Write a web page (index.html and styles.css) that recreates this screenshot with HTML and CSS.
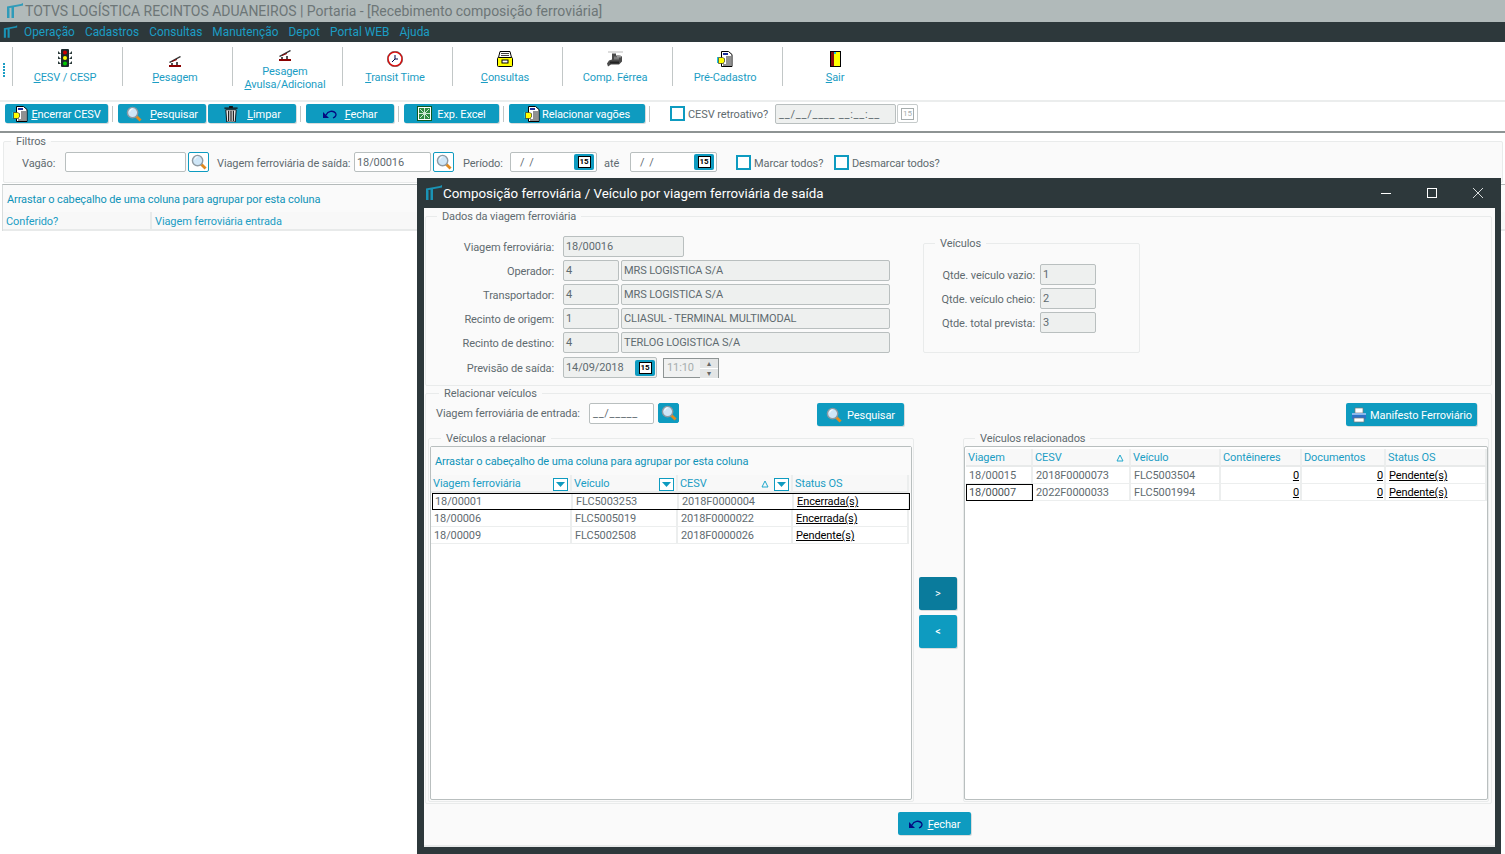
FILE: index.html
```html
<!DOCTYPE html>
<html lang="pt-BR">
<head>
<meta charset="utf-8">
<title>TOTVS Logística Recintos Aduaneiros</title>
<link rel="stylesheet" href="styles.css">
</head>
<body>
<svg class="defs" aria-hidden="true">
  <symbol id="logo" viewBox="0 0 18 16"><path d="M1 15V4h2.500v11zM5.500 15V4H8v11zM1 3.500 15 1l2-1v2.500L1 5.500z" fill="currentColor"/></symbol>
  <symbol id="traffic" viewBox="0 0 14 18"><path d="M0 2l3 3H0zM14 2l-3 3h3zM0 7l3 3H0zM14 7l-3 3h3zM0 12l3 3H0zM14 12l-3 3h3z" fill="#2b3a3a"/><rect x="3" y="0" width="8" height="18" rx="1" fill="#1d2a2c"/><circle cx="7" cy="3.500" r="2" fill="#c00"/><circle cx="7" cy="9" r="2" fill="#ff0"/><circle cx="7" cy="14.500" r="2" fill="#0c0"/></symbol>
  <symbol id="scale" viewBox="0 0 12 11"><path d="M0 6 11 0l1 1L1 7z" fill="#333"/><path d="M2 7h2v2H2zM7 6h2v3H7z" fill="#555"/><path d="M0 9h12v2H0z" fill="#8b0000"/><path d="M3 5l5-2v1L3 6z" fill="#8b0000"/></symbol>
  <symbol id="clock" viewBox="0 0 16 16"><circle cx="8" cy="8" r="7" fill="#fff" stroke="#e01010" stroke-width="1.600"/><circle cx="8" cy="8" r="7.800" fill="none" stroke="#222" stroke-width=".4"/><path d="M8 4v4l-3 3M8 8h3" fill="none" stroke="#004" stroke-width="1"/></symbol>
  <symbol id="box" viewBox="0 0 16 16"><path d="M3 .5h10l1.500 6h-13z" fill="#fff" stroke="#000"/><path d="M4 2.500h8M4 4.500h8" stroke="#444"/><rect x=".5" y="6.500" width="15" height="9" rx="1" fill="#ff0" stroke="#000"/><rect x="5" y="9" width="6" height="3" fill="#fff" stroke="#000"/></symbol>
  <symbol id="train" viewBox="0 0 16 15"><path d="M1 .5h15" stroke="#bbb"/><path d="M5 2h4v2h3l3 1v5l-3 3H4l-3 2-1-3 2-3 3-1z" fill="#4a4a4a"/><path d="M7 5h5v3H7z" fill="#7c7c7c"/><path d="M3 10h9v2H3z" fill="#222"/><path d="M10 4h4v2h-4z" fill="#999"/></symbol>
  <symbol id="doc" viewBox="0 0 16 16"><path d="M4.500 .5h7l3.500 3v12H4.500z" fill="#fff" stroke="#000"/><path d="M6 2h5v2H6z" fill="#1a2f9c"/><path d="M9 6h5M9 8h5M9 10h5M9 12h5M6 14h8" stroke="#222"/><path d="M0 6h1.500v6H0z" fill="#18c8e0"/><path d="M1.500 6.500h4l2.500 1.500-1 1 1 1-1 1-.5 1.500h-5z" fill="#ff0" stroke="#333" stroke-width=".7"/></symbol>
  <symbol id="door" viewBox="0 0 11 16"><rect x=".5" y=".5" width="10" height="15" fill="#ff0" stroke="#000"/><path d="M1 1h3v14H1z" fill="#8b0d0d"/><path d="M4 1h2v2H4z" fill="#18c8e0"/></symbol>
  <symbol id="lens" viewBox="0 0 17 17"><path d="M10 10l5.500 5.500" stroke="#e08a20" stroke-width="3"/><circle cx="7" cy="7" r="5.500" fill="#cfe6f7" stroke="#8e9aa3" stroke-width="1.500"/><path d="M4 6a3 3 0 0 1 3-3" stroke="#fff" fill="none"/></symbol>
  <symbol id="trash" viewBox="0 0 14 17"><path d="M5 0h4v1.500h5V3H0V1.500h5z" fill="#111"/><path d="M1.500 4h11l-1 13h-9z" fill="#e8e8e8" stroke="#111"/><path d="M4.500 5v11M7 5v11M9.500 5v11" stroke="#111" stroke-width="1.200"/></symbol>
  <symbol id="undo" viewBox="0 0 14 10"><path d="M0 3v6h6z" fill="#040a80"/><path d="M3 6C5 2 10 1 12.500 4c1.200 2 0 4-2.500 5" fill="none" stroke="#040a80" stroke-width="1.300"/></symbol>
  <symbol id="excel" viewBox="0 0 15 15"><rect x=".5" y=".5" width="14" height="14" fill="#fff" stroke="#0d5a20"/><path d="M2 2h11v11H2z" fill="#2f8a40"/><path d="M3 3l9 9M12 3l-9 9M7.500 2v11M2 7.500h11" stroke="#cfe8d3"/></symbol>
  <symbol id="printer" viewBox="0 0 16 16"><path d="M4 1h8v5H4z" fill="#fff" stroke="#777" stroke-width=".7"/><path d="M1 6h14v6H1z" fill="#2e72c8"/><path d="M1 6h14v2H1z" fill="#8ab8ea"/><path d="M3 11h10v4H3z" fill="#fff" stroke="#777" stroke-width=".7"/></symbol>
  <symbol id="caret" viewBox="0 0 9 5"><path d="M0 0h9L4.500 5z" fill="currentColor"/></symbol>
  <symbol id="sort" viewBox="0 0 8 8"><path d="M4 1l3 6H1z" fill="none" stroke="#20a8cc"/></symbol>
</svg>

<div class="desk">
  <header class="titlebar"><svg class="logo"><use href="#logo"/></svg><span>TOTVS LOGÍSTICA RECINTOS ADUANEIROS | Portaria - [Recebimento composição ferroviária]</span></header>
  <nav class="menubar">
    <svg class="logo logo-menu"><use href="#logo"/></svg>
    <span>Operação</span><span>Cadastros</span><span>Consultas</span><span>Manutenção</span><span>Depot</span><span>Portal WEB</span><span>Ajuda</span>
  </nav>

  <div class="toolbar">
    <div class="grip"></div>
    <div class="tool"><div class="slot"><svg class="i-traffic"><use href="#traffic"/></svg></div><div class="tool-label"><u>C</u>ESV / CESP</div></div>
    <div class="tool"><div class="slot"><svg class="i-scale"><use href="#scale"/></svg></div><div class="tool-label"><u>P</u>esagem</div></div>
    <div class="tool tool-two"><div class="slot"><svg class="i-scale"><use href="#scale"/></svg></div><div class="tool-label">Pesagem<br><u>A</u>vulsa/Adicional</div></div>
    <div class="tool"><div class="slot"><svg class="i-16"><use href="#clock"/></svg></div><div class="tool-label"><u>T</u>ransit Time</div></div>
    <div class="tool"><div class="slot"><svg class="i-16"><use href="#box"/></svg></div><div class="tool-label"><u>C</u>onsultas</div></div>
    <div class="tool"><div class="slot"><svg class="i-16"><use href="#train"/></svg></div><div class="tool-label">Comp. Férrea</div></div>
    <div class="tool"><div class="slot"><svg class="i-16"><use href="#doc"/></svg></div><div class="tool-label">Pré-Cadastro</div></div>
    <div class="tool"><div class="slot"><svg class="i-door"><use href="#door"/></svg></div><div class="tool-label"><u>S</u>air</div></div>
  </div>

  <div class="actionbar">
    <button class="btn w-encerrar"><svg class="i-16"><use href="#doc"/></svg><span><u>E</u>ncerrar CESV</span></button>
    <i class="bar-sep"></i>
    <button class="btn w-88"><svg class="i-16"><use href="#lens"/></svg><span><u>P</u>esquisar</span></button>
    <button class="btn w-88 btn-next"><svg class="i-16"><use href="#trash"/></svg><span><u>L</u>impar</span></button>
    <i class="bar-sep"></i>
    <button class="btn w-88"><svg class="i-undo"><use href="#undo"/></svg><span><u>F</u>echar</span></button>
    <i class="bar-sep"></i>
    <button class="btn w-excel"><svg class="i-15"><use href="#excel"/></svg><span>Exp. Excel</span></button>
    <i class="bar-sep"></i>
    <button class="btn w-relacionar"><svg class="i-16"><use href="#doc"/></svg><span>Relacionar vagões</span></button>
    <i class="bar-sep"></i>
    <span class="check check-retro"></span><span class="lbl lbl-retro">CESV retroativo?</span>
    <span class="field field-ro w-retro">__/__/____ __:__:__</span>
    <span class="cal-off"><b>15</b></span>
  </div>

  <fieldset class="group filters">
    <legend>Filtros</legend>
    <div class="filter-row">
      <span class="lbl lbl-vagao">Vagão:</span>
      <span class="field w-vagao"></span>
      <span class="lookup"><svg class="i-16"><use href="#lens"/></svg></span>
      <span class="lbl lbl-viagem">Viagem ferroviária de saída:</span>
      <span class="field w-viagem">18/00016</span>
      <span class="lookup"><svg class="i-16"><use href="#lens"/></svg></span>
      <span class="lbl lbl-periodo">Período:</span>
      <span class="field w-date"><span>/ /</span><span class="cal"><b>15</b></span></span>
      <span class="lbl lbl-ate">até</span>
      <span class="field w-date"><span>/ /</span><span class="cal"><b>15</b></span></span>
      <span class="check check-marcar"></span><span class="lbl lbl-marcar">Marcar todos?</span>
      <span class="check check-desm"></span><span class="lbl">Desmarcar todos?</span>
    </div>
  </fieldset>

  <section class="maingrid">
    <div class="grouphint">Arrastar o cabeçalho de uma coluna para agrupar por esta coluna</div>
    <div class="mainhead"><div>Conferido?</div><div>Viagem ferroviária entrada</div></div>
  </section>

  <section class="window">
    <header class="win-title">
      <svg class="logo logo-win"><use href="#logo"/></svg>
      <span class="win-name">Composição ferroviária / Veículo por viagem ferroviária de saída</span>
      <span class="win-ctl">
        <svg viewBox="0 0 12 12"><path d="M1 6.500h10" stroke="#fff"/></svg>
        <svg viewBox="0 0 12 12"><rect x="1.500" y="1.500" width="9" height="9" fill="none" stroke="#fff"/></svg>
        <svg viewBox="0 0 12 12"><path d="M1 1l10 10M11 1 1 11" stroke="#d8dcdc"/></svg>
      </span>
    </header>
    <div class="win-body">
      <fieldset class="group dados">
        <legend>Dados da viagem ferroviária</legend>
        <div class="dados-form">
          <div class="form-row"><span class="flabel">Viagem ferroviária:</span><span class="field field-ro w-121">18/00016</span></div>
          <div class="form-row"><span class="flabel">Operador:</span><span class="field field-ro w-56">4</span><span class="field field-ro w-269">MRS LOGISTICA S/A</span></div>
          <div class="form-row"><span class="flabel">Transportador:</span><span class="field field-ro w-56">4</span><span class="field field-ro w-269">MRS LOGISTICA S/A</span></div>
          <div class="form-row"><span class="flabel">Recinto de origem:</span><span class="field field-ro w-56">1</span><span class="field field-ro w-269">CLIASUL - TERMINAL MULTIMODAL</span></div>
          <div class="form-row"><span class="flabel">Recinto de destino:</span><span class="field field-ro w-56">4</span><span class="field field-ro w-269">TERLOG LOGISTICA S/A</span></div>
          <div class="form-row form-date"><span class="flabel">Previsão de saída:</span><span class="field field-ro w-94"><span>14/09/2018</span><span class="cal cal-ro"><b>15</b></span></span><span class="spin"><span>11:10</span><span class="spin-btns"><i>▴</i><i>▾</i></span></span></div>
        </div>
        <fieldset class="group veiculos">
          <legend>Veículos</legend>
          <div class="form-row"><span class="flabel">Qtde. veículo vazio:</span><span class="field field-ro w-56">1</span></div>
          <div class="form-row"><span class="flabel">Qtde. veículo cheio:</span><span class="field field-ro w-56">2</span></div>
          <div class="form-row"><span class="flabel">Qtde. total prevista:</span><span class="field field-ro w-56">3</span></div>
        </fieldset>
      </fieldset>

      <fieldset class="group relacionar">
        <legend>Relacionar veículos</legend>
        <div class="rel-top">
          <span class="lbl">Viagem ferroviária de entrada:</span>
          <span class="field w-entrada">__/_____</span>
          <span class="lookup lookup-fill"><svg class="i-16"><use href="#lens"/></svg></span>
          <button class="btn btn-tall w-pesq"><svg class="i-16"><use href="#lens"/></svg><span>Pesquisar</span></button>
          <button class="btn btn-tall w-manif"><svg class="i-16"><use href="#printer"/></svg><span>Manifesto Ferroviário</span></button>
        </div>
        <div class="rel-panes">
          <fieldset class="group pane pane-left">
            <legend>Veículos a relacionar</legend>
            <div class="grid">
              <div class="grouphint hint-in">Arrastar o cabeçalho de uma coluna para agrupar por esta coluna</div>
              <div class="row row-head cols-left">
                <div class="cell">Viagem ferroviária<span class="filter"><svg><use href="#caret"/></svg></span></div>
                <div class="cell">Veículo<span class="filter"><svg><use href="#caret"/></svg></span></div>
                <div class="cell">CESV<svg class="sort"><use href="#sort"/></svg><span class="filter"><svg><use href="#caret"/></svg></span></div>
                <div class="cell">Status OS</div>
              </div>
              <div class="row cols-left row-sel"><div class="cell">18/00001</div><div class="cell">FLC5003253</div><div class="cell">2018F0000004</div><div class="cell cell-link">Encerrada(s)</div></div>
              <div class="row cols-left"><div class="cell">18/00006</div><div class="cell">FLC5005019</div><div class="cell">2018F0000022</div><div class="cell cell-link">Encerrada(s)</div></div>
              <div class="row cols-left"><div class="cell">18/00009</div><div class="cell">FLC5002508</div><div class="cell">2018F0000026</div><div class="cell cell-link">Pendente(s)</div></div>
            </div>
          </fieldset>
          <div class="movers">
            <button class="mover mover-dark">&gt;</button>
            <button class="mover">&lt;</button>
          </div>
          <fieldset class="group pane pane-right">
            <legend>Veículos relacionados</legend>
            <div class="grid grid-right">
              <div class="row row-head cols-right">
                <div class="cell">Viagem</div>
                <div class="cell">CESV<svg class="sort sort-end"><use href="#sort"/></svg></div>
                <div class="cell">Veículo</div>
                <div class="cell">Contêineres</div>
                <div class="cell">Documentos</div>
                <div class="cell">Status OS</div>
              </div>
              <div class="row cols-right"><div class="cell">18/00015</div><div class="cell">2018F0000073</div><div class="cell">FLC5003504</div><div class="cell cell-link cell-num">0</div><div class="cell cell-link cell-num">0</div><div class="cell cell-link">Pendente(s)</div></div>
              <div class="row cols-right"><div class="cell cell-sel">18/00007</div><div class="cell">2022F0000033</div><div class="cell">FLC5001994</div><div class="cell cell-link cell-num">0</div><div class="cell cell-link cell-num">0</div><div class="cell cell-link">Pendente(s)</div></div>
            </div>
          </fieldset>
        </div>
      </fieldset>

      <div class="win-foot"><button class="btn btn-tall w-fechar"><svg class="i-undo"><use href="#undo"/></svg><span><u>F</u>echar</span></button></div>
    </div>
  </section>
</div>
</body>
</html>
```
FILE: styles.css
```css
* { box-sizing: border-box; }
html, body { margin: 0; padding: 0; background: #fff; }
body { font: 11px/13px Roboto, "Liberation Sans", Arial, sans-serif; letter-spacing: -0.1px; color: #5f6b70; overflow: hidden; }
.defs { display: none; }
svg { display: block; flex: none; }
u { text-underline-offset: 1px; }

.desk { position: relative; width: 1505px; height: 854px; overflow: hidden; background: #fff; }

.titlebar { height: 22px; background: #b1baba; color: #6d7677; display: flex; align-items: center; font-size: 14px; letter-spacing: -0.03px; padding-left: 6px; }
.logo { width: 18px; height: 16px; color: #1a93b5; }
.titlebar .logo { color: #2f9bb9; margin-right: 1px; }
.menubar { height: 20px; background: #2d383b; color: #1b9dc4; display: flex; align-items: center; font-size: 11.9px; letter-spacing: 0; gap: 10px; padding-left: 3px; }
.logo-menu { width: 15px; height: 14px; margin-right: -4px; }

.toolbar { height: 58px; padding: 5px 0 0 12px; display: flex; background: #fff; position: relative; }
.grip { position: absolute; left: 3px; top: 21px; width: 2px; height: 14px; background: repeating-linear-gradient(#1b9dc4 0 2px, #fff 2px 3px); }
.tool { width: 110px; height: 39px; border-left: 1px solid #c2c7c7; display: flex; flex-direction: column; align-items: center; padding: 3px 5px 0 0; color: #1b9dc4; }
.slot { height: 17px; margin-bottom: 4px; display: flex; align-items: flex-end; justify-content: center; }
.tool-two .slot { height: 11px; }
.tool-label { text-align: center; white-space: nowrap; }
.i-traffic { width: 14px; height: 18px; }
.i-scale { width: 12px; height: 11px; }
.i-16 { width: 16px; height: 16px; }
.i-15 { width: 15px; height: 15px; }
.i-door { width: 11px; height: 16px; }
.i-undo { width: 14px; height: 10px; }

.actionbar { height: 33px; border-top: 2px solid #ebeded; border-bottom: 2px solid #8e9494; padding: 2px 0 0 5px; display: flex; align-items: flex-start; background: #fff; }
.btn { height: 19px; border: 0; border-radius: 2px; background: #0e9bc0; color: #fff; font: inherit; letter-spacing: inherit; display: flex; align-items: center; justify-content: center; gap: 5px; padding: 0; box-shadow: 1px 1px 0 #d9dcdc; }
.btn span { padding-top: 1px; }
.btn-next { margin-left: 2px; }
.btn-tall { height: 23px; }
.w-encerrar { width: 103px; gap: 3px; }
.w-88 { width: 88px; gap: 8px; }
.w-excel { width: 95px; }
.w-relacionar { width: 136px; gap: 2px; }
.bar-sep { width: 1px; height: 16px; margin: 2px 5px 0 4px; background: #c2c7c7; }
.check { width: 15px; height: 15px; border: 2px solid #0e9bc0; background: #fff; flex: none; }
.check-retro { margin: 2px 3px 0 15px; }
.actionbar .lbl { margin-top: 4px; }
.lbl-retro { width: 87px; }
.field { height: 20px; background: #fff; border: 1px solid #b9bfbf; border-radius: 2px; padding: 0 2px; display: flex; align-items: center; color: #5f6b70; flex: none; white-space: nowrap; }
.field-ro { background: #eef0ef; }
.w-retro { width: 121px; padding-left: 3px; letter-spacing: 0.75px; }
.cal-off { width: 21px; height: 19px; margin-left: 1px; border: 1px solid #c6cbcb; border-radius: 2px; color: #a6adad; display: flex; align-items: center; justify-content: center; }
.cal-off b { width: 13px; height: 12px; border: 1px solid #a6adad; font: 8px/10px Roboto, sans-serif; text-align: center; }

.group { border: 1px solid #e9ebeb; border-radius: 2px; margin: 0; padding: 0; min-width: 0; }
.group legend { padding: 2px 5px 0; margin-left: 11px; line-height: 12px; color: #5f6b70; }
.filters { margin: 1px 2px 0 3px; height: 49px; background: #fafafa; padding: 4px 0 0 18px; }
.filters legend { margin-inline-start: -11px; }
.filter-row { display: flex; align-items: center; height: 20px; }
.lbl { white-space: nowrap; flex: none; }
.filter-row .lbl { padding-top: 2px; }
.lbl-vagao { width: 43px; }
.w-vagao { width: 121px; }
.lookup { width: 21px; height: 20px; margin-left: 2px; border: 1px solid #0e9bc0; border-radius: 2px; display: flex; align-items: center; justify-content: center; flex: none; background: #fff; }
.lookup-fill { background: #0e9bc0; margin-left: 4px; }
.lbl-viagem { margin-left: 8px; width: 137px; }
.w-viagem { width: 77px; }
.lbl-periodo { margin-left: 9px; width: 47px; }
.w-date { width: 87px; justify-content: space-between; padding: 0 2px 0 9px; letter-spacing: 1px; }
.cal { width: 20px; height: 16px; background: #0e9bc0; display: flex; align-items: center; justify-content: center; border-radius: 2px; flex: none; }
.cal b { width: 13px; height: 12px; background: #fff; border: 1px solid #000; color: #000; font: bold 8px/10px Roboto, sans-serif; letter-spacing: 0; text-align: center; }
.lbl-ate { margin-left: 7px; width: 26px; }
.check-marcar { margin: 0 3px 0 19px; }
.lbl-marcar { width: 69px; }
.check-desm { margin: 0 3px 0 11px; }

.maingrid { margin: 1px 0 0 2px; border-top: 1px solid #b4baba; border-left: 1px solid #d8dcdc; }
.grouphint { height: 27px; background: #fafafa; color: #0e93b8; padding: 8px 0 0 4px; }
.mainhead { height: 19px; display: flex; background: #f8f8f8; border-bottom: 2px solid #e8eaea; color: #1b9dc4; }
.mainhead div { padding: 3px 0 0 3px; width: 149px; border-right: 2px solid #e8eaea; }
.mainhead div + div { flex: 1; border: 0; }

.window { position: absolute; left: 417px; top: 178px; width: 1084px; height: 676px; background: #2d383b; padding: 0 6px 7px 7px; display: flex; flex-direction: column; }
.win-title { height: 30px; flex: none; display: flex; align-items: center; color: #fff; }
.logo-win { margin: 0 0 0 1px; }
.win-name { font-size: 13.35px; letter-spacing: 0; flex: 1; }
.win-ctl { display: flex; gap: 34px; padding-right: 11px; }
.win-ctl svg { width: 12px; height: 12px; }
.win-body { flex: 1; background: #fafafa; padding: 1px 3px 0 1px; display: flex; flex-direction: column; min-height: 0; border-bottom: 2px solid #e8eaea; }

.dados { height: 177px; position: relative; flex: none; }
.dados-form { padding: 13px 0 0 0; display: flex; flex-direction: column; gap: 3px; }
.form-row { display: flex; gap: 2px; height: 21px; align-items: center; }
.flabel { width: 128px; text-align: right; margin-right: 7px; padding-top: 2px; white-space: nowrap; flex: none; }
.form-row .field { height: 21px; }
.w-121 { width: 121px; }
.w-56 { width: 56px; }
.w-269 { width: 269px; }
.w-94 { width: 94px; justify-content: space-between; padding-right: 1px; }
.form-date { margin-top: 1px; }
.spin { width: 56px; height: 20px; margin-left: 4px; border: 1px solid #8e9494; background: #f0f1f1; color: #a6adad; display: flex; align-items: center; padding-left: 3px; justify-content: space-between; }
.spin-btns { width: 18px; height: 18px; display: flex; flex-direction: column; }
.spin-btns i { flex: 1; font-style: normal; font-size: 8px; line-height: 9px; text-align: center; background: #e3e5e5; color: #666; border-bottom: 1px solid #fff; }
.veiculos { position: absolute; left: 497px; top: 13px; width: 217px; height: 117px; padding-top: 14px; display: flex; flex-direction: column; gap: 3px; }
.veiculos .flabel { width: 111px; margin-right: 3px; }

.relacionar { height: 418px; flex: none; padding: 3px 3px 0 2px; }
.rel-top { display: flex; align-items: flex-start; height: 28px; padding-left: 8px; }
.rel-top .lbl { margin: 4px 6px 0 0; width: 147px; }
.w-entrada { width: 65px; height: 21px; padding-left: 3px; letter-spacing: 0.7px; }
.w-pesq { width: 87px; margin-left: 138px; gap: 5px; }
.w-manif { width: 131px; margin-left: 442px; gap: 3px; }
.rel-panes { display: flex; height: 371px; }
.pane { flex: none; height: 371px; padding: 1px; }
.pane-left { width: 486px; }
.pane-right { width: 526px; padding: 1px 0 0; }
.grid { height: 354px; border: 1px solid #b9bfbf; border-radius: 2px; background: #fff; display: flex; flex-direction: column; }
.hint-in { flex: none; background: #fafafa; height: 28px; padding: 8px 0 0 4px; }
.grid-right { padding: 2px 1px 1px; }
.row { display: grid; height: 17px; flex: none; color: #5f6b70; }
.cols-left { grid-template-columns: 141px 106px 115px 116px; }
.cols-right { grid-template-columns: 67px 98px 90px 81px 84px 101px; }
.cell { border-right: 2px solid #eceeee; border-bottom: 1px solid #eceeee; padding: 2px 0 0 3px; display: flex; align-items: flex-start; white-space: nowrap; min-width: 0; }
.row-head { height: 18px; background: #f8f8f8; color: #1b9dc4; }
.row-head .cell { padding: 2px 0 0 2px; border-bottom: 2px solid #e8eaea; }
.filter { width: 15px; height: 13px; margin: 1px 2px 0 auto; border: 1px solid #0e9bc0; background: #fff; color: #0e9bc0; display: flex; align-items: center; justify-content: center; flex: none; }
.filter svg { width: 9px; height: 5px; }
.sort { width: 8px; height: 8px; margin: 3px 0 0 auto; }
.sort-end { margin-right: 5px; }
.sort + .filter { margin-left: 5px; }
.row-sel { outline: 1px solid #000; outline-offset: -1px; width: 478px; margin-left: 1px; }
.cell-link { color: #000; text-decoration: underline; }
.cell-num { justify-content: flex-end; padding: 2px 1px 0 0; }
.cell-sel { outline: 1px solid #000; outline-offset: -1px; color: #4c5659; }

.movers { width: 49px; flex: none; display: flex; flex-direction: column; align-items: flex-start; gap: 5px; padding: 146px 0 0 5px; }
.mover { width: 38px; height: 33px; border: 0; border-radius: 2px; background: #0e9bc0; color: #fff; font: inherit; padding: 0; box-shadow: 1px 1px 0 #d9dcdc; }
.mover-dark { background: #0a7b9c; }

.win-foot { flex: 1; padding: 8px 0 0 473px; }
.w-fechar { width: 73px; gap: 5px; }
```
